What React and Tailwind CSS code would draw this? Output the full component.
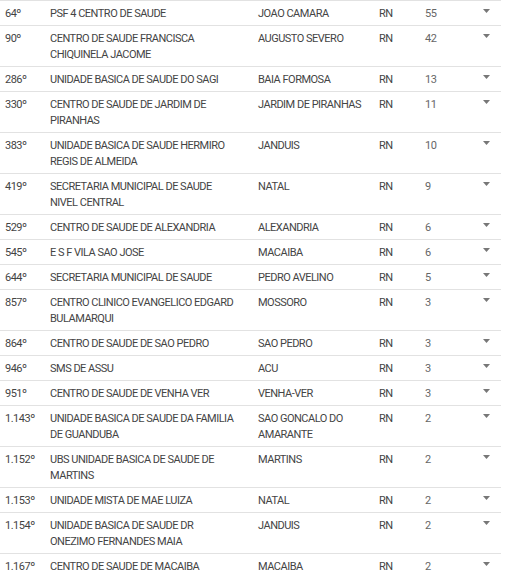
const rows = [
  { pos: '64º', name: ['PSF 4 CENTRO DE SAUDE'], city: ['JOAO CAMARA'], uf: 'RN', total: 55 },
  { pos: '90º', name: ['CENTRO DE SAUDE FRANCISCA', 'CHIQUINELA JACOME'], city: ['AUGUSTO SEVERO'], uf: 'RN', total: 42 },
  { pos: '286º', name: ['UNIDADE BASICA DE SAUDE DO SAGI'], city: ['BAIA FORMOSA'], uf: 'RN', total: 13 },
  { pos: '330º', name: ['CENTRO DE SAUDE DE JARDIM DE', 'PIRANHAS'], city: ['JARDIM DE PIRANHAS'], uf: 'RN', total: 11 },
  { pos: '383º', name: ['UNIDADE BASICA DE SAUDE HERMIRO', 'REGIS DE ALMEIDA'], city: ['JANDUIS'], uf: 'RN', total: 10 },
  { pos: '419º', name: ['SECRETARIA MUNICIPAL DE SAUDE', 'NIVEL CENTRAL'], city: ['NATAL'], uf: 'RN', total: 9 },
  { pos: '529º', name: ['CENTRO DE SAUDE DE ALEXANDRIA'], city: ['ALEXANDRIA'], uf: 'RN', total: 6 },
  { pos: '545º', name: ['E S F VILA SAO JOSE'], city: ['MACAIBA'], uf: 'RN', total: 6 },
  { pos: '644º', name: ['SECRETARIA MUNICIPAL DE SAUDE'], city: ['PEDRO AVELINO'], uf: 'RN', total: 5 },
  { pos: '857º', name: ['CENTRO CLINICO EVANGELICO EDGARD', 'BULAMARQUI'], city: ['MOSSORO'], uf: 'RN', total: 3 },
  { pos: '864º', name: ['CENTRO DE SAUDE DE SAO PEDRO'], city: ['SAO PEDRO'], uf: 'RN', total: 3 },
  { pos: '946º', name: ['SMS DE ASSU'], city: ['ACU'], uf: 'RN', total: 3 },
  { pos: '951º', name: ['CENTRO DE SAUDE DE VENHA VER'], city: ['VENHA-VER'], uf: 'RN', total: 3 },
  { pos: '1.143º', name: ['UNIDADE BASICA DE SAUDE DA FAMILIA', 'DE GUANDUBA'], city: ['SAO GONCALO DO', 'AMARANTE'], uf: 'RN', total: 2 },
  { pos: '1.152º', name: ['UBS UNIDADE BASICA DE SAUDE DE', 'MARTINS'], city: ['MARTINS'], uf: 'RN', total: 2 },
  { pos: '1.153º', name: ['UNIDADE MISTA DE MAE LUIZA'], city: ['NATAL'], uf: 'RN', total: 2 },
  { pos: '1.154º', name: ['UNIDADE BASICA DE SAUDE DR', 'ONEZIMO FERNANDES MAIA'], city: ['JANDUIS'], uf: 'RN', total: 2 },
  { pos: '1.167º', name: ['CENTRO DE SAUDE DE MACAIBA'], city: ['MACAIBA'], uf: 'RN', total: 2 },
];

const Lines = ({ lines }) => (
  <div>
    {lines.map((l) => (
      <div key={l} className="whitespace-nowrap">{l}</div>
    ))}
  </div>
);

export default function App() {
  return (
    <div className="bg-white min-h-screen">
      <div className="w-[501px] text-[11px] leading-[16px] tracking-[-0.5px] text-[#444] font-['Roboto','Liberation_Sans',sans-serif]">
        {rows.map((r) => (
          <div
            key={r.pos}
            className="grid grid-cols-[50px_208px_121px_46px_1fr] border-t border-[#e2e2e2] pt-[5px] pb-[3px]"
          >
            <div className="pl-[5px]">{r.pos}</div>
            <Lines lines={r.name} />
            <Lines lines={r.city} />
            <div>{r.uf}</div>
            <div className="flex justify-between pr-[11px]">
              <span className="text-[#666]">{r.total}</span>
              <svg width="7" height="4" viewBox="0 0 7 4" className="mt-[3px]">
                <polygon points="0,0 7,0 3.5,4" fill="#777" />
              </svg>
            </div>
          </div>
        ))}
      </div>
    </div>
  );
}
